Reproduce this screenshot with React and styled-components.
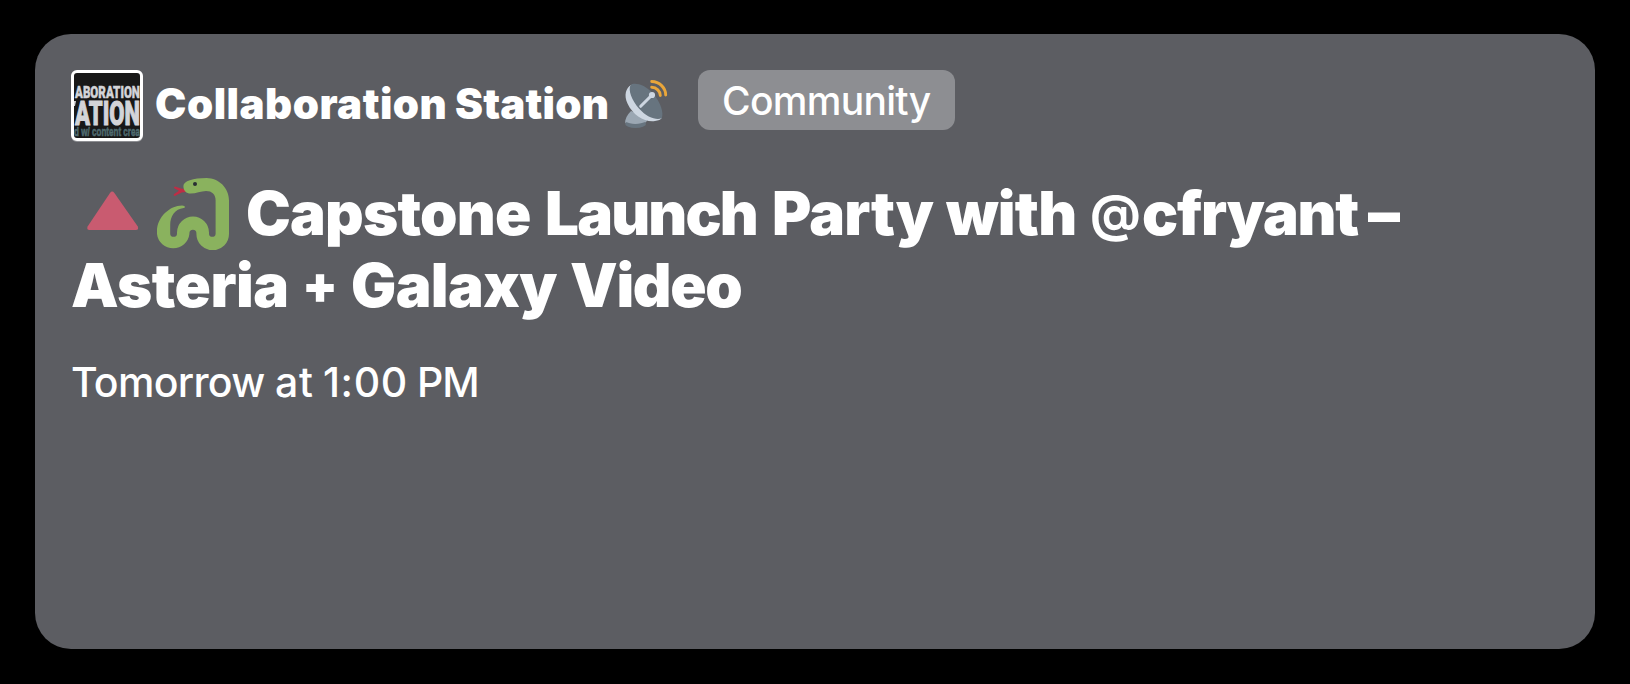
import styled, { createGlobalStyle } from "styled-components";

const GlobalStyle = createGlobalStyle`
	* {
		box-sizing: border-box;
	}
	body {
		margin: 0;
		background-color: #000;
		font-family: Inter, "Liberation Sans", sans-serif;
		color: #fff;
	}
`;
const Page = styled.div`
	height: 684px;
	padding: 34px 35px 35px;
`;
const Card = styled.div`
	height: 615px;
	padding: 36px;
	border-radius: 36px;
	background-color: #5c5d62;
`;
const Header = styled.div`
	display: flex;
	align-items: flex-start;
	height: 72px;
`;
const Avatar = styled.div`
	width: 72px;
	height: 71px;
	border: 3px solid #fff;
	border-radius: 6px;
	background-color: #181818;
	box-shadow: 0 1px 0 #8d8e92;
	overflow: hidden;
	svg {
		display: block;
	}
`;
const Name = styled.div`
	display: flex;
	margin-left: 12px;
	line-height: 68px;
	font-size: 42px;
	font-weight: 900;
`;
const Badge = styled.div`
	width: 257px;
	height: 60px;
	margin-left: 28px;
	padding-left: 24px;
	border-radius: 12px;
	background-color: #8d8e92;
	font-size: 39px;
	font-weight: 450;
	letter-spacing: -0.7px;
	line-height: 61px;
	white-space: nowrap;
`;
const Title = styled.h1`
	margin: 35px 0 0;
	font-size: 60px;
	font-weight: 900;
	line-height: 72px;
`;
const Line = styled.div`
	display: flex;
	height: 72px;
`;
const Word = styled.span`
	flex: none;
	width: ${(props) => props.$width}px;
	letter-spacing: ${(props) => props.$spacing || 0}px;
	white-space: nowrap;
`;
const Sign = styled(Word)`
	font-size: ${(props) => props.$size}px;
	font-weight: ${(props) => props.$weight};
`;
const Emoji = styled.svg`
	flex: none;
	width: ${(props) => props.$size}px;
	height: ${(props) => props.$size}px;
	margin: ${(props) => props.$margin};
`;
const Time = styled.div`
	display: flex;
	margin-top: 31px;
	font-size: 41px;
	font-weight: 450;
	line-height: 60px;
`;

function AvatarArt() {
	return (
		<svg width="66" height="65" viewBox="0 0 66 65">
			<g
				fill="#d3d4d8"
				stroke="#d3d4d8"
				fontFamily="Roboto, Liberation Sans"
				fontWeight="900"
			>
				<text
					x="1"
					y="25"
					strokeWidth="0.5"
					fontSize="17"
					textLength="65"
					lengthAdjust="spacingAndGlyphs"
				>
					ABORATION
				</text>
				<text
					x="1"
					y="51.5"
					strokeWidth="1"
					fontSize="34"
					textLength="65"
					lengthAdjust="spacingAndGlyphs"
				>
					ATION
				</text>
			</g>
			<path d="M0 28h2l-1 5H0z" fill="#d3d4d8" />
			<text
				x="0"
				y="62.5"
				fill="#4f6b70"
				stroke="#4f6b70"
				strokeWidth="0.6"
				fontFamily="Liberation Sans"
				fontWeight="700"
				fontSize="13"
				textLength="66"
				lengthAdjust="spacingAndGlyphs"
			>
				d w/ content crea
			</text>
		</svg>
	);
}

function Dish() {
	return (
		<Emoji viewBox="0 0 48 48" $size={48} $margin="10px 0 0 0">
			<path
				d="M9 31C5 35 3 39 3.2 43c6 3 15 3 21-1l2-5z"
				fill="#9ba7b3"
			/>
			<ellipse cx="13.6" cy="44" rx="10.4" ry="4" fill="#67747f" />
			<path d="M3.4 41.5c5 3.2 14.5 3.2 20.6 0l1-3-20-1z" fill="#9ba7b3" />
			<path
				d="M9 5C4 8 1.5 15 5.5 23.5 11 35.5 23 42.5 33 41c3.5-.5 6-1.5 6.7-3z"
				fill="#cdd6e1"
			/>
			<path
				d="M8.5 5.2C12 2 23 4.5 31 13.5c8 9 11 20 8.7 24.7-5 2.5-15-1-22.5-9.5C9.5 20 6 10 8.5 5.2z"
				fill="#67747f"
			/>
			<path d="M18.7 26.3 30 15" stroke="#cdd6e1" strokeWidth="3" strokeLinecap="round" />
			<circle cx="30" cy="15" r="3.1" fill="#cdd6e1" />
			<g fill="none" stroke="#eaa63a" strokeWidth="2.9" strokeLinecap="round">
				<path d="M29.7 1.5C37.5 1.5 43.7 8 43.7 15" />
				<path d="M29.7 7.3C34.5 7.3 38.3 11.5 38.3 15.5" />
			</g>
		</Emoji>
	);
}

function Triangle() {
	return (
		<Emoji viewBox="0 0 72 72" $size={72} $margin="1px 4px 0 6px">
			<path
				d="M33 14.9Q35.2 12.3 37.4 14.9L60.8 48.5Q62 52 58.8 52H12.6Q9.4 52 10.6 48.5Z"
				fill="#c95b70"
			/>
		</Emoji>
	);
}

function Snake() {
	return (
		<Emoji viewBox="0 0 36 36" $size={72} $margin="1px 17px 0 4px">
			<path
				d="M14.8 5.7 12 5.3 9 4.3Q8.3 4.5 8.6 5.1L11 6.4 8.4 8.1Q8.1 8.9 8.9 9L12.3 7.2 15 6.9z"
				fill="#be2d45"
			/>
			<path
				d="M24.8 0C31 .1 36 5 36 11.2V28a8 8 0 0 1-16.3 0v-.4a1.7 1.7 0 0 0-3.5 0v.4A8.15 8 0 0 1 0 28v-1.5C0 19.5 6.5 13.7 12.5 13.7c1.5 0 2 1.1.8 1.3C9 15.5 6.6 19 6.6 23.5V28c0 1.9 3.4 1.9 3.4 0v-.7a8 8 0 0 1 16 0v.7c0 1.9 3.3 1.9 3.3 0V11.2c0-3-1.8-4.7-4.8-4.7-2.5 0-5 1.3-7.7 1.3-2.2 0-3.6-1.5-3.6-3.8C13.2 1.5 18 0 24.8 0z"
				fill="#8ab25e"
			/>
			<circle cx="19" cy="3" r="1" fill="#292f33" />
		</Emoji>
	);
}

function App() {
	return (
		<>
			<GlobalStyle />
			<Page>
				<Card>
					<Header>
						<Avatar>
							<AvatarArt />
						</Avatar>
						<Name>
							<Word $width={300} $spacing={0.5}>Collaboration</Word>
							<Word $width={167} $spacing={0.2}>Station</Word>
						</Name>
						<Dish />
						<Badge>Community</Badge>
					</Header>
					<Title>
						<Line>
							<Triangle />
							<Snake />
							<Word $width={299} $spacing={-0.8}>Capstone</Word>
							<Word $width={227} $spacing={-1.8}>Launch</Word>
							<Word $width={174} $spacing={-0.7}>Party</Word>
							<Word $width={144} $spacing={-0.8}>with</Word>
							<Sign $width={52} $size={50} $weight={750}>@</Sign>
							<Word $width={226} $spacing={-1.2}>cfryant</Word>
							<Sign $width={44} $size={64} $weight={900}>–</Sign>
						</Line>
						<Line>
							<Word $width={231} $spacing={-0.5}>Asteria</Word>
							<Sign $width={49} $size={52} $weight={900}>+</Sign>
							<Word $width={219} $spacing={-0.6}>Galaxy</Word>
							<Word $width={180} $spacing={-1.3}>Video</Word>
						</Line>
					</Title>
					<Time>
						<Word $width={204} $spacing={-0.7}>Tomorrow</Word>
						<Word $width={48} $spacing={0.8}>at</Word>
						<Word $width={94} $spacing={0.6}>1:00</Word>
						<Word $width={70} $spacing={-1}>PM</Word>
					</Time>
				</Card>
			</Page>
		</>
	);
}

export default App;
